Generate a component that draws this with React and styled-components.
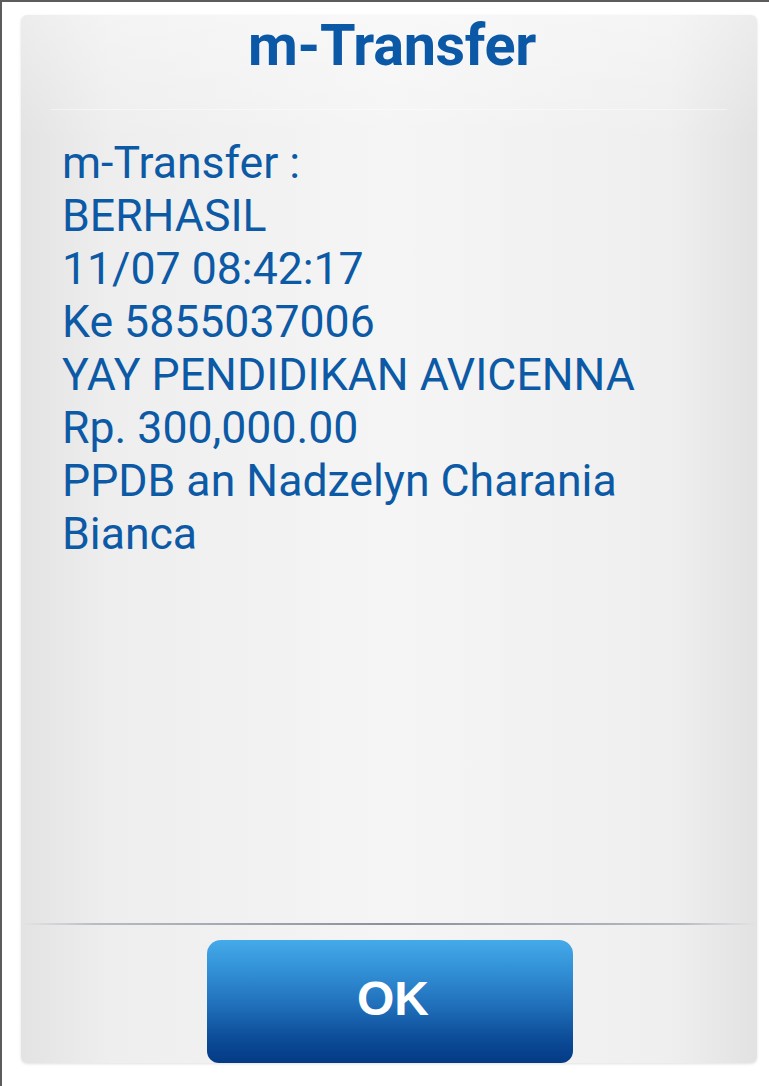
import React from 'react';
import styled, { createGlobalStyle } from 'styled-components';

const GlobalStyle = createGlobalStyle`
  html, body {
    margin: 0;
    padding: 0;
    background: #ffffff;
  }
  * { box-sizing: border-box; }
`;

const Screen = styled.div`
  width: 769px;
  height: 1086px;
  border-top: 2px solid #5c5c5c;
  border-left: 2px solid #5c5c5c;
  padding: 13px 12px 0 19px;
  background: #ffffff;
  overflow: hidden;
`;

const Dialog = styled.div`
  width: 736px;
  height: 1048px;
  display: flex;
  flex-direction: column;
  border-radius: 6px;
  background:
    linear-gradient(180deg, rgba(255, 255, 255, 0.35) 0%, rgba(255, 255, 255, 0) 12%),
    linear-gradient(90deg, #e3e3e3 0%, #eeeeee 12%, #f5f5f5 50%, #efefef 88%, #e2e2e2 100%);
  box-shadow: 0 1px 3px rgba(0, 0, 0, 0.12);
`;

const Header = styled.div`
  height: 95px;
  padding: 2px 0 0 6px;
  display: flex;
  justify-content: center;
  border-bottom: 1px solid rgba(255, 255, 255, 0.45);
  margin: 0 30px;
`;

const Title = styled.h1`
  margin: 0;
  font-family: Roboto, "Noto Sans", sans-serif;
  font-weight: 700;
  font-size: 57.5px;
  line-height: 57px;
  color: #0a58a6;
  letter-spacing: -0.3px;
`;

const Body = styled.div`
  flex: 1;
  padding: 27px 0 0 41px;
`;

const Line = styled.div`
  font-family: Roboto, "Noto Sans", sans-serif;
  font-size: 44.6px;
  line-height: 53px;
  color: #0c5aa6;
  white-space: nowrap;
`;

const Divider = styled.div`
  height: 2px;
  background: linear-gradient(
    90deg,
    rgba(160, 164, 175, 0) 0%,
    #b9bcc4 10%,
    #8b909c 50%,
    #b9bcc4 90%,
    rgba(160, 164, 175, 0) 100%
  );
`;

const Footer = styled.div`
  padding-top: 15px;
  display: flex;
  justify-content: center;
`;

const OkButton = styled.button`
  width: 366px;
  height: 123px;
  margin-left: 2px;
  border: none;
  border-radius: 14px 14px 12px 12px;
  background: linear-gradient(180deg, #44aae9 0%, #3290d6 25%, #1f6db8 55%, #0c4c98 80%, #043a86 100%);
  color: #ffffff;
  font-family: "Liberation Sans", Arial, sans-serif;
  font-weight: 700;
  font-size: 48px;
  padding: 0 0 6px 6px;
  cursor: pointer;
`;

const lines = [
  'm-Transfer :',
  'BERHASIL',
  '11/07 08:42:17',
  'Ke 5855037006',
  'YAY PENDIDIKAN AVICENNA',
  'Rp. 300,000.00',
  'PPDB an Nadzelyn Charania',
  'Bianca',
];

export default function App() {
  return (
    <>
      <GlobalStyle />
      <Screen>
        <Dialog>
          <Header>
            <Title>m-Transfer</Title>
          </Header>
          <Body>
            {lines.map((text) => (
              <Line key={text}>{text}</Line>
            ))}
          </Body>
          <Divider />
          <Footer>
            <OkButton>OK</OkButton>
          </Footer>
        </Dialog>
      </Screen>
    </>
  );
}
